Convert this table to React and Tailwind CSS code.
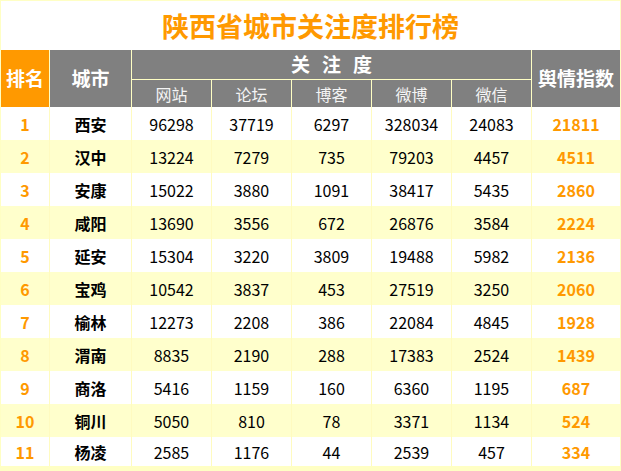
import React from "react";

const rows = [
  [1, "西安", 96298, 37719, 6297, 328034, 24083, 21811],
  [2, "汉中", 13224, 7279, 735, 79203, 4457, 4511],
  [3, "安康", 15022, 3880, 1091, 38417, 5435, 2860],
  [4, "咸阳", 13690, 3556, 672, 26876, 3584, 2224],
  [5, "延安", 15304, 3220, 3809, 19488, 5982, 2136],
  [6, "宝鸡", 10542, 3837, 453, 27519, 3250, 2060],
  [7, "榆林", 12273, 2208, 386, 22084, 4845, 1928],
  [8, "渭南", 8835, 2190, 288, 17383, 2524, 1439],
  [9, "商洛", 5416, 1159, 160, 6360, 1195, 687],
  [10, "铜川", 5050, 810, 78, 3371, 1134, 524],
  [11, "杨凌", 2585, 1176, 44, 2539, 457, 334],
];

const subs = ["网站", "论坛", "博客", "微博", "微信"];

export default function App() {
  return (
    <div
      className="w-[621px] h-[471px] bg-[#FFFFC4] pt-px pl-px overflow-hidden"
      style={{ fontFamily: '"Noto Sans CJK SC", "Noto Sans", sans-serif' }}
    >
      <div className="w-[619px] h-[49px] bg-white flex items-center justify-center text-[#FF9900] font-bold text-[27px] leading-none">
        陕西省城市关注度排行榜
      </div>
      <div className="flex gap-px w-[619px]">
        <div className="w-[48px] h-[57px] bg-[#FF9900] flex items-center justify-center text-white font-bold text-[19px]">
          排名
        </div>
        <div className="w-[81px] h-[57px] bg-[#808080] flex items-center justify-center text-white font-bold text-[19px]">
          城市
        </div>
        <div className="w-[399px] flex flex-col gap-px">
          <div className="h-[29px] bg-[#808080] flex items-center justify-center text-white font-bold text-[19px] tracking-[12px] pl-[12px]">
            关注度
          </div>
          <div className="flex gap-px">
            {subs.map((s) => (
              <div
                key={s}
                className="w-[79px] h-[27px] bg-[#808080] flex items-center justify-center text-[#F4F4F4] text-[16px]"
              >
                {s}
              </div>
            ))}
          </div>
        </div>
        <div className="w-[88px] h-[57px] bg-[#808080] flex items-center justify-center text-white font-bold text-[19px]">
          舆情指数
        </div>
      </div>
      {rows.map((r, i) => {
        const bg = i % 2 === 1 ? "bg-[#FFFFCC]" : "bg-white";
        const h = i === rows.length - 1 ? "h-[29px]" : "h-[33px]";
        return (
          <div key={r[0]} className="flex gap-px w-[619px] bg-[#FFFBC0]">
            <div className={`w-[48px] ${h} ${bg} flex items-center justify-center text-[#FF9900] font-bold text-[16px]`}>
              {r[0]}
            </div>
            <div className={`w-[81px] ${h} ${bg} flex items-center justify-center text-black font-bold text-[16px]`}>
              {r[1]}
            </div>
            {r.slice(2, 7).map((v, j) => (
              <div
                key={j}
                className={`w-[79px] ${h} ${bg} flex items-center justify-center text-black text-[16px]`}
              >
                {v}
              </div>
            ))}
            <div className={`w-[88px] ${h} ${bg} flex items-center justify-center text-[#FF9900] font-bold text-[16px]`}>
              {r[7]}
            </div>
          </div>
        );
      })}
    </div>
  );
}
